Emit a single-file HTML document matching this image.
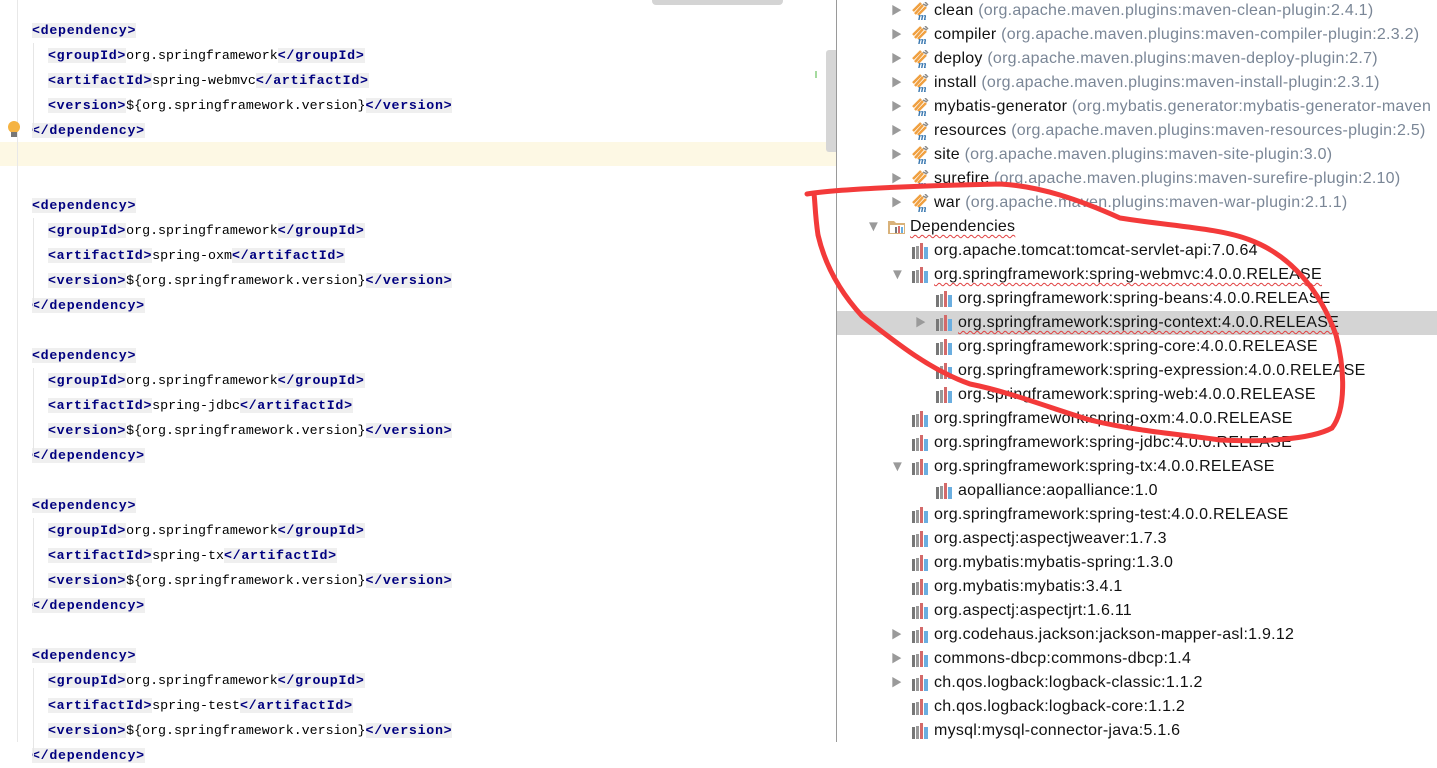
<!DOCTYPE html>
<html><head><meta charset="utf-8"><style>
body{margin:0;width:1437px;height:742px;overflow:hidden;background:#fff;position:relative;font-family:"Liberation Sans","Noto Sans CJK SC",sans-serif}
.ed{position:absolute;left:0;top:0;width:836px;height:742px;background:#fff}
.ln{position:absolute;left:32px;height:25px;line-height:25px;font-family:"Liberation Mono","Noto Sans CJK SC",monospace;font-size:13.3px;color:#000;white-space:pre}
.t{background:#efefef;color:#000080;font-weight:bold;letter-spacing:0.7px}
.tr{position:absolute;left:837px;right:0;height:24px;line-height:24px;font-size:16px;letter-spacing:0.25px;color:#111;white-space:nowrap}
.g{color:#7a8696}
.ar{position:absolute;top:0;font-size:11px;color:#9a9a9a}
.ard{position:absolute;top:0;font-size:15px;color:#9a9a9a}
.ic{position:absolute;top:3px}
.u{text-decoration:underline wavy #e04040;text-decoration-thickness:1px;text-underline-offset:3px}
</style></head><body>
<div class="ed">
<div style="position:absolute;left:0;top:142px;width:836px;height:24px;background:#fdf8e4"></div>
<div style="position:absolute;left:17px;top:0;width:1px;height:742px;background:#e8e8e8"></div>
<div style="position:absolute;left:652px;top:0;width:131px;height:5px;background:#d4d4d4;border-radius:0 0 4px 4px"></div>
<div style="position:absolute;left:826px;top:50px;width:10px;height:102px;background:#d6d6d6;border-radius:3px 0 0 3px"></div>
<div style="position:absolute;left:815px;top:71px;width:2px;height:7px;background:#a6dba0"></div>
<div style="position:absolute;left:8px;top:121px;width:12px;height:12px;border-radius:50%;background:#f5b342"></div>
<div style="position:absolute;left:11px;top:132px;width:6px;height:5px;background:#777"></div>
</div>
<div style="position:absolute;left:836px;top:0;width:1px;height:742px;background:#9a9a9a"></div>
<div id="code"></div>
<div id="tree"></div>
<svg style="position:absolute;left:0;top:0" width="1437" height="742"><path d="M807,194 C830,190 900,186 1000,184 C1040,186 1080,200 1120,218 C1170,226 1220,228 1250,240 C1290,255 1320,290 1336,335 C1345,370 1346,410 1332,428 C1310,440 1260,442 1220,440 C1180,434 1140,432 1090,420 C1050,408 1010,392 970,384 C930,370 895,342 862,316 C840,292 825,265 818,235 C815,215 815,200 814,194" fill="none" stroke="#f33a3a" stroke-width="5" stroke-linecap="round"/></svg>
<script>
var L=[];function dep(y,a){
L.push([y,0,'<span class="t">&lt;dependency&gt;</span>']);
L.push([y+25,16,'<span class="t">&lt;groupId&gt;</span>org.springframework<span class="t">&lt;/groupId&gt;</span>']);
L.push([y+50,16,'<span class="t">&lt;artifactId&gt;</span>'+a+'<span class="t">&lt;/artifactId&gt;</span>']);
L.push([y+75,16,'<span class="t">&lt;version&gt;</span>${org.springframework.version}<span class="t">&lt;/version&gt;</span>']);
L.push([y+100,0,'<span class="t">&lt;/dependency&gt;</span>']);}
dep(18,'spring-webmvc');dep(193,'spring-oxm');dep(343,'spring-jdbc');dep(493,'spring-tx');dep(643,'spring-test');
var h='';L.forEach(function(l){h+='<div class="ln" style="top:'+l[0]+'px;left:'+(32+l[1])+'px">'+l[2]+'</div>';});
[[30,90],[205,90],[355,90],[505,90],[655,90]].forEach(function(v){h+='<div style="position:absolute;left:33px;top:'+(v[0]+13)+'px;width:1px;height:'+v[1]+'px;background:#e6e6e6"></div>'});
document.getElementById('code').innerHTML=h;
var mv='<svg class="ic" width="20" height="18"><path d="M4,12 L12,3 M7,13 L15,5 M2,9 L10,1" stroke="#f0a040" stroke-width="2.5"/><path d="M12,2 l4,2 M14,0 l3,3" stroke="#888" stroke-width="1.5"/><text x="7" y="18" font-size="11" font-style="italic" font-weight="bold" fill="#3a78b0" font-family="Liberation Serif">m</text></svg>';
var lib='<svg class="ic" width="20" height="18"><rect x="1" y="5" width="3" height="12" fill="#777"/><rect x="5" y="4" width="3" height="13" fill="#999"/><rect x="9" y="1" width="3" height="16" fill="#d46a6a"/><rect x="13" y="5" width="4" height="12" fill="#6aaee0"/></svg>';
var fold='<svg class="ic" width="20" height="18"><path d="M1,3 h6 l2,2 h9 v11 h-17z" fill="#d9b27a"/><rect x="3" y="7" width="14" height="8" fill="#fff"/><rect x="8" y="9" width="2" height="6" fill="#777"/><rect x="11" y="8" width="2" height="7" fill="#d46a6a"/><rect x="14" y="9" width="2" height="6" fill="#6aaee0"/></svg>';
var T=[[1,'r',mv,'clean',' (org.apache.maven.plugins:maven-clean-plugin:2.4.1)'],[1,'r',mv,'compiler',' (org.apache.maven.plugins:maven-compiler-plugin:2.3.2)'],[1,'r',mv,'deploy',' (org.apache.maven.plugins:maven-deploy-plugin:2.7)'],[1,'r',mv,'install',' (org.apache.maven.plugins:maven-install-plugin:2.3.1)'],[1,'r',mv,'mybatis-generator',' (org.mybatis.generator:mybatis-generator-maven'],[1,'r',mv,'resources',' (org.apache.maven.plugins:maven-resources-plugin:2.5)'],[1,'r',mv,'site',' (org.apache.maven.plugins:maven-site-plugin:3.0)'],[1,'r',mv,'surefire',' (org.apache.maven.plugins:maven-surefire-plugin:2.10)'],[1,'r',mv,'war',' (org.apache.maven.plugins:maven-war-plugin:2.1.1)'],
[0,'d',fold,'<span class="u">Dependencies</span>',''],[1,'',lib,'org.apache.tomcat:tomcat-servlet-api:7.0.64',''],[1,'d',lib,'<span class="u">org.springframework:spring-webmvc:4.0.0.RELEASE</span>',''],[2,'',lib,'org.springframework:spring-beans:4.0.0.RELEASE',''],[2,'r',lib,'<span class="u">org.springframework:spring-context:4.0.0.RELEASE</span>','',1],[2,'',lib,'org.springframework:spring-core:4.0.0.RELEASE',''],[2,'',lib,'org.springframework:spring-expression:4.0.0.RELEASE',''],[2,'',lib,'org.springframework:spring-web:4.0.0.RELEASE',''],[1,'',lib,'org.springframework:spring-oxm:4.0.0.RELEASE',''],[1,'',lib,'org.springframework:spring-jdbc:4.0.0.RELEASE',''],[1,'d',lib,'org.springframework:spring-tx:4.0.0.RELEASE',''],[2,'',lib,'aopalliance:aopalliance:1.0',''],[1,'',lib,'org.springframework:spring-test:4.0.0.RELEASE',''],[1,'',lib,'org.aspectj:aspectjweaver:1.7.3',''],[1,'',lib,'org.mybatis:mybatis-spring:1.3.0',''],[1,'',lib,'org.mybatis:mybatis:3.4.1',''],[1,'',lib,'org.aspectj:aspectjrt:1.6.11',''],[1,'r',lib,'org.codehaus.jackson:jackson-mapper-asl:1.9.12',''],[1,'r',lib,'commons-dbcp:commons-dbcp:1.4',''],[1,'r',lib,'ch.qos.logback:logback-classic:1.1.2',''],[1,'',lib,'ch.qos.logback:logback-core:1.1.2',''],[1,'',lib,'mysql:mysql-connector-java:5.1.6','']];
h='';T.forEach(function(r,i){var x=(r[0]-1)*24+97;
h+='<div class="tr" style="top:'+(i*24-1)+'px;'+(r[5]?'background:#d4d4d4':'')+'">'+(r[1]=='r'?'<span class="ar" style="left:'+(x-43)+'px">&#9654;</span>':r[1]=='d'?'<span class="ard" style="left:'+(x-44)+'px">&#9660;</span>':'')+'<span style="position:absolute;left:'+(x-23)+'px;top:0">'+r[2]+'</span><span style="position:absolute;left:'+x+'px">'+r[3]+'<span class="g">'+r[4]+'</span></span></div>';});
document.getElementById('tree').innerHTML=h;
</script>
</body></html>
